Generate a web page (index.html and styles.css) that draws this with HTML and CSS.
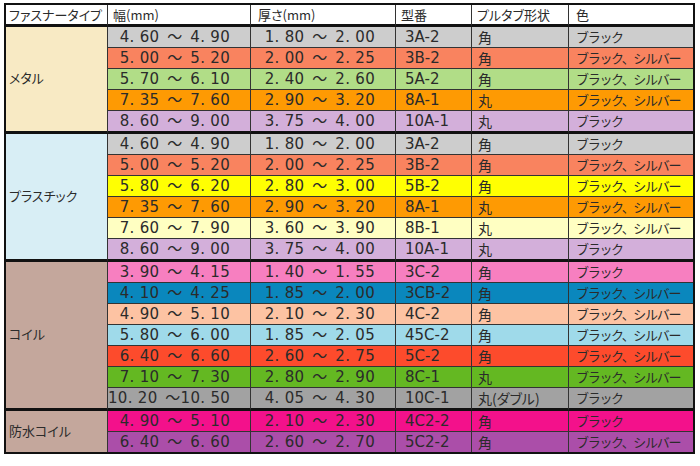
FILE: index.html
```html
<!DOCTYPE html>
<html lang="ja">
<head>
<meta charset="utf-8">
<title>ファスナー規格表</title>
<link rel="stylesheet" href="styles.css">
</head>
<body>
<table class="spec">
  <colgroup>
    <col class="c-type"><col class="c-w"><col class="c-t"><col class="c-no"><col class="c-tab"><col class="c-col">
  </colgroup>
  <thead>
    <tr class="head">
      <th class="type">ファスナータイプ</th><th>幅(mm)</th><th class="th-t">厚さ(mm)</th><th>型番</th><th>プルタブ形状</th><th class="th-c">色</th>
    </tr>
  </thead>
  <tbody class="grp metal">
    <tr class="r-gray"><td class="type" rowspan="5">メタル</td><td class="num">4. 60&ensp;～&ensp;4. 90</td><td class="num">1. 80&ensp;～&ensp;2. 00</td><td class="no">3A-2</td><td class="tab">角</td><td class="col">ブラック</td></tr>
    <tr class="r-salmon"><td class="num">5. 00&ensp;～&ensp;5. 20</td><td class="num">2. 00&ensp;～&ensp;2. 25</td><td class="no">3B-2</td><td class="tab">角</td><td class="col">ブラック、シルバー</td></tr>
    <tr class="r-green"><td class="num">5. 70&ensp;～&ensp;6. 10</td><td class="num">2. 40&ensp;～&ensp;2. 60</td><td class="no">5A-2</td><td class="tab">角</td><td class="col">ブラック、シルバー</td></tr>
    <tr class="r-orange"><td class="num">7. 35&ensp;～&ensp;7. 60</td><td class="num">2. 90&ensp;～&ensp;3. 20</td><td class="no">8A-1</td><td class="tab">丸</td><td class="col">ブラック、シルバー</td></tr>
    <tr class="r-lav last"><td class="num">8. 60&ensp;～&ensp;9. 00</td><td class="num">3. 75&ensp;～&ensp;4. 00</td><td class="no">10A-1</td><td class="tab">丸</td><td class="col">ブラック</td></tr>
  </tbody>
  <tbody class="grp plastic">
    <tr class="r-gray"><td class="type" rowspan="6">プラスチック</td><td class="num">4. 60&ensp;～&ensp;4. 90</td><td class="num">1. 80&ensp;～&ensp;2. 00</td><td class="no">3A-2</td><td class="tab">角</td><td class="col">ブラック</td></tr>
    <tr class="r-salmon"><td class="num">5. 00&ensp;～&ensp;5. 20</td><td class="num">2. 00&ensp;～&ensp;2. 25</td><td class="no">3B-2</td><td class="tab">角</td><td class="col">ブラック、シルバー</td></tr>
    <tr class="r-yellow"><td class="num">5. 80&ensp;～&ensp;6. 20</td><td class="num">2. 80&ensp;～&ensp;3. 00</td><td class="no">5B-2</td><td class="tab">角</td><td class="col">ブラック、シルバー</td></tr>
    <tr class="r-orange"><td class="num">7. 35&ensp;～&ensp;7. 60</td><td class="num">2. 90&ensp;～&ensp;3. 20</td><td class="no">8A-1</td><td class="tab">丸</td><td class="col">ブラック、シルバー</td></tr>
    <tr class="r-cream"><td class="num">7. 60&ensp;～&ensp;7. 90</td><td class="num">3. 60&ensp;～&ensp;3. 90</td><td class="no">8B-1</td><td class="tab">丸</td><td class="col">ブラック、シルバー</td></tr>
    <tr class="r-lav last"><td class="num">8. 60&ensp;～&ensp;9. 00</td><td class="num">3. 75&ensp;～&ensp;4. 00</td><td class="no">10A-1</td><td class="tab">丸</td><td class="col">ブラック</td></tr>
  </tbody>
  <tbody class="grp coil">
    <tr class="r-pink"><td class="type" rowspan="7">コイル</td><td class="num">3. 90&ensp;～&ensp;4. 15</td><td class="num">1. 40&ensp;～&ensp;1. 55</td><td class="no">3C-2</td><td class="tab">角</td><td class="col">ブラック</td></tr>
    <tr class="r-blue"><td class="num">4. 10&ensp;～&ensp;4. 25</td><td class="num">1. 85&ensp;～&ensp;2. 00</td><td class="no">3CB-2</td><td class="tab">角</td><td class="col">ブラック、シルバー</td></tr>
    <tr class="r-peach"><td class="num">4. 90&ensp;～&ensp;5. 10</td><td class="num">2. 10&ensp;～&ensp;2. 30</td><td class="no">4C-2</td><td class="tab">角</td><td class="col">ブラック、シルバー</td></tr>
    <tr class="r-sky"><td class="num">5. 80&ensp;～&ensp;6. 00</td><td class="num">1. 85&ensp;～&ensp;2. 05</td><td class="no">45C-2</td><td class="tab">角</td><td class="col">ブラック、シルバー</td></tr>
    <tr class="r-red"><td class="num">6. 40&ensp;～&ensp;6. 60</td><td class="num">2. 60&ensp;～&ensp;2. 75</td><td class="no">5C-2</td><td class="tab">角</td><td class="col">ブラック、シルバー</td></tr>
    <tr class="r-lime"><td class="num">7. 10&ensp;～&ensp;7. 30</td><td class="num">2. 80&ensp;～&ensp;2. 90</td><td class="no">8C-1</td><td class="tab">丸</td><td class="col">ブラック、シルバー</td></tr>
    <tr class="r-dgray last"><td class="num">10. 20&ensp;～10. 50</td><td class="num">4. 05&ensp;～&ensp;4. 30</td><td class="no">10C-1</td><td class="tab">丸(ダブル)</td><td class="col">ブラック</td></tr>
  </tbody>
  <tbody class="grp water">
    <tr class="r-magenta"><td class="type" rowspan="2">防水コイル</td><td class="num">4. 90&ensp;～&ensp;5. 10</td><td class="num">2. 10&ensp;～&ensp;2. 30</td><td class="no">4C2-2</td><td class="tab">角</td><td class="col">ブラック</td></tr>
    <tr class="r-purple last"><td class="num">6. 40&ensp;～&ensp;6. 60</td><td class="num">2. 60&ensp;～&ensp;2. 70</td><td class="no">5C2-2</td><td class="tab">角</td><td class="col">ブラック、シルバー</td></tr>
  </tbody>
</table>
</body>
</html>
```
FILE: styles.css
```css
html, body {
  margin: 0;
  padding: 0;
  background: #ffffff;
}
body {
  padding: 3px 0 0 4px;
  font-family: "Noto Sans CJK JP", "Noto Sans", sans-serif;
  color: #2b2b2b;
}
.spec {
  border-collapse: separate;
  border-spacing: 0;
  border: 2px solid #111;
  table-layout: fixed;
  width: 691px;
  font-size: 13px;
  font-feature-settings: "palt";
}
.c-type { width: 101px; }
.c-w { width: 143px; }
.c-t { width: 145px; }
.c-no { width: 76px; }
.c-tab { width: 97px; }
.c-col { width: 125px; }

.spec th, .spec td {
  padding: 0 0 0 5px;
  text-align: left;
  font-weight: normal;
  white-space: nowrap;
  border-left: 1px solid #333;
  border-bottom: 1px solid #333;
  height: 21px;
  line-height: 20px;
  box-sizing: border-box;
  vertical-align: top;
}
.spec td.type {
  border-left: 0;
  padding: 0 0 2px 3px;
  vertical-align: middle;
}
.head th {
  background: #fff;
  height: 22px;
  line-height: 19px;
  border-bottom: 3px solid #111;
  font-size: 13px;
}
.head th.type { border-left: 0; padding-left: 3px; }
.head .th-t { padding-left: 7px; }
.head .th-c { padding-left: 7px; }
.spec td.num {
  font-family: "DejaVu Sans", "Noto Sans CJK JP", sans-serif;
  font-size: 15px;
  text-align: right;
  padding: 0 20px 0 0;
  letter-spacing: 0.3px;
  font-feature-settings: normal;
}
.spec td.no {
  font-family: "DejaVu Sans", "Noto Sans CJK JP", sans-serif;
  font-size: 15px;
  padding: 0 0 0 9px;
  font-feature-settings: normal;
}
.spec td.tab { padding-left: 6px; font-size: 14px; }
.spec td.col {
  padding-left: 7px;
  font-size: 13px;
  letter-spacing: -1.3px;
  font-feature-settings: normal;
}
.spec tr.last td, .spec td.type {
  border-bottom: 3px solid #111;
}
.spec tr.last td { height: 23px; }
.water tr.last td, .water td.type { border-bottom: 0; }
.water tr.last td { height: 20px; }

.metal .type { background: #f8eac4; }
.plastic .type { background: #d8eef5; }
.coil .type, .water .type { background: #c4a79c; }

.r-gray td { background: #cdcdcd; }
.r-salmon td { background: #f9835f; }
.r-green td { background: #b1dd87; }
.r-orange td { background: #fe9a03; }
.r-lav td { background: #d3afda; }
.r-yellow td { background: #ffff02; }
.r-cream td { background: #ffffc2; }
.r-pink td { background: #f77fc0; }
.r-blue td { background: #0a87bd; }
.r-peach td { background: #fdc3a3; }
.r-sky td { background: #9fdaea; }
.r-red td { background: #fd4b2c; }
.r-lime td { background: #64b822; }
.r-dgray td { background: #a2a2a2; }
.r-magenta td { background: #f3118b; }
.r-purple td { background: #ab4ea9; }
```
